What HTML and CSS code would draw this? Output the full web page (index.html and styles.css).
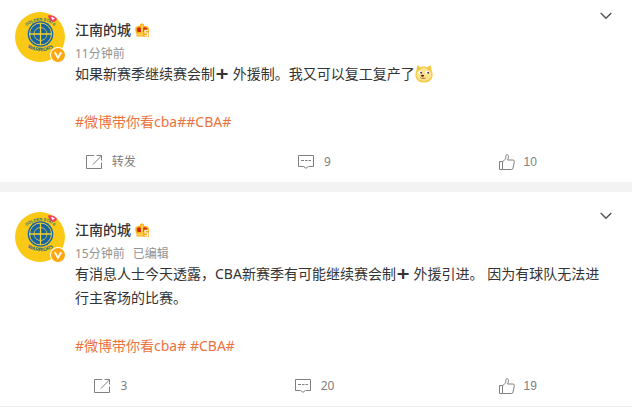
FILE: index.html
```html
<!DOCTYPE html>
<html lang="zh-CN">
<head>
    <meta charset="UTF-8">
    <meta name="viewport" content="width=device-width, initial-scale=1.0">
    <title>江南的城的微博</title>
    <link rel="stylesheet" href="styles.css">
</head>
<body>

    <!-- shared icons -->
    <svg class="sprite" aria-hidden="true">
        <symbol id="icon-avatar" viewBox="0 0 50 50">
            <circle cx="25" cy="25" r="25" fill="#f9c916"/>
            <circle cx="25.500" cy="22" r="12.800" fill="#1464a5"/>
            <g fill="none" stroke="#f3cf2c" stroke-width="1">
                <circle cx="25.500" cy="22" r="11"/>
                <circle cx="25.500" cy="22" r="6.500" stroke-width=".8"/>
                <path d="M25.500 11v22M14.500 22h22" stroke-width="1.300"/>
            </g>
            <path id="arc-top" d="M8 17Q25.500 0 43 17" fill="none"/>
            <path id="arc-bottom" d="M8 32.500Q25.500 46 43 32.500" fill="none"/>
            <g fill="#246580" font-family="Liberation Sans, sans-serif" font-weight="bold" text-anchor="middle">
                <text font-size="4"><textPath href="#arc-top" startOffset="50%">GOLDEN STATE</textPath></text>
                <text font-size="5"><textPath href="#arc-bottom" startOffset="50%">WARRIORS</textPath></text>
            </g>
            <path d="M33 3.500q5-1.500 9 3l-1 2.500-3.500 1q-4-2-4.500-6.500z" fill="#f23c60"/>
            <path d="M36 5.200q1.500-1 2 .6 1.800-.6 1.500 1.200l-2 1z" fill="#fff"/>
        </symbol>
        <symbol id="icon-verified" viewBox="0 0 16 16">
            <circle cx="8" cy="8" r="8" fill="#fff"/>
            <circle cx="8" cy="8" r="7" fill="#ffa70f"/>
            <path d="M4.800 5.200L8 11l3.200-5.800" fill="none" stroke="#fff" stroke-width="1.800"/>
        </symbol>
        <symbol id="icon-crown" viewBox="0 0 14 14">
            <path d="M1 4Q-.3 5 .4 8L1.500 10.500V13.500h11V10.500l1.100-2.500q.7-3-.6-4-1.500-1.500-4-1L9 1.500 7 .2 5 1.500V3Q2.500 2.500 1 4z" fill="#fbb01e"/>
            <path d="M2 5.500Q4 3.500 5.800 5L6 9H3.200Q1.300 8 2 5.500zM8.200 5Q10 3.500 12 5.500q.7 2-1 3.500H8z" fill="#d7260f"/>
            <path d="M7 2v8M2.500 11.500H8" stroke="#ffe15a" stroke-width="1.300" fill="none"/>
            <path d="M8.500 6.500H14V14H8.500z" fill="#fba71b"/>
            <path d="M13.200 7.500h-3v2.500h2.500v2.800H9.500" stroke="#fff" stroke-width="1.200" fill="none"/>
        </symbol>
        <symbol id="icon-doge" viewBox="0 0 18 18">
            <path d="M2 .7Q3.500-.2 5.500 2.200 9 1 12.500 2.200 14.500-.2 16 .7L16.500 5Q18 8 17.500 11.500 16 17.500 9 17.600 2 17.500.5 11.500 0 8 1.500 5z" fill="#f6c944"/>
            <path d="M2.600 6Q4.500 3 9 3t6.400 3Q17 9 16.200 11.500 14.500 15.500 9 16 3.500 15.500 1.800 11.500 1 9 2.600 6z" fill="#fde58e"/>
            <ellipse cx="5.300" cy="7.500" rx="2.200" ry="1.500" fill="#fff"/>
            <ellipse cx="12.500" cy="7.500" rx="2.200" ry="1.500" fill="#fff"/>
            <circle cx="6.200" cy="7.700" r="1" fill="#5a3420"/>
            <circle cx="13.200" cy="7.700" r="1" fill="#5a3420"/>
            <path d="M3.500 5l2-.8M12.500 4.200l2 .8" stroke="#d9a640" stroke-width=".8" fill="none"/>
            <ellipse cx="7.500" cy="10.800" rx="1.600" ry="1" fill="#5a1d18"/>
            <path d="M5.500 12.300Q6.500 14.300 8 13q1.200 1 2.500 0" stroke="#b0552a" stroke-width="1" fill="none"/>
        </symbol>
        <symbol id="icon-more" viewBox="0 0 12 8">
            <path d="M.7 1L6 6.300 11.300 1" fill="none" stroke="currentColor" stroke-width="1.500"/>
        </symbol>
        <symbol id="icon-repost" viewBox="0 0 16 14">
            <path d="M8 .5H.5v13h15V7.500M7 9.500L15.300 1M10.500.5h5v5" fill="none" stroke="currentColor"/>
        </symbol>
        <symbol id="icon-comment" viewBox="0 0 16 14">
            <path d="M.5.500h15v11h-5L8 13.300 5.500 11.500h-5z" fill="none" stroke="currentColor"/>
            <path d="M3 5.500h3M7 5.500h2.500M10.500 5.500H13" fill="none" stroke="currentColor"/>
        </symbol>
        <symbol id="icon-like" viewBox="0 0 16 16">
            <path d="M.5 7.500h3v8h-3zM3.500 7.500C6 6.500 7 4.500 7 1.500 7 .3 9.500.2 9.500 2.500c0 1.500-.5 2.500-1 3.500h5.500q1.600.2 1.400 1.800L14 14q-.3 1.500-1.500 1.500h-9" fill="none" stroke="currentColor"/>
        </symbol>
    </svg>

    <main class="feed">

        <article class="card">
            <header class="card-head">
                <a class="avatar" href="#" aria-label="江南的城">
                    <svg class="avatar-img"><use href="#icon-avatar"/></svg>
                    <svg class="avatar-badge"><use href="#icon-verified"/></svg>
                </a>
                <div class="info">
                    <div class="name-row">
                        <a class="name" href="#">江南的城</a>
                        <svg class="crown"><use href="#icon-crown"/></svg>
                    </div>
                    <div class="meta">
                        <a href="#">11分钟前</a>
                    </div>
                </div>
                <button class="more" type="button" aria-label="更多">
                    <svg class="more-icon"><use href="#icon-more"/></svg>
                </button>
            </header>
            <div class="content">
                <p>如果新赛季继续赛会制<span class="plus">➕&#xFE0E;</span> 外援制。我又可以复工复产了<svg class="emoji"><use href="#icon-doge"/></svg></p>
                <p class="tags"><a href="#">#微博带你看cba#</a><a href="#">#CBA#</a></p>
            </div>
            <footer class="actions">
                <button type="button"><svg class="icon"><use href="#icon-repost"/></svg><span>转发</span></button>
                <button type="button"><svg class="icon"><use href="#icon-comment"/></svg><span>9</span></button>
                <button class="like" type="button"><svg class="icon"><use href="#icon-like"/></svg><span>10</span></button>
            </footer>
        </article>

        <article class="card">
            <header class="card-head">
                <a class="avatar" href="#" aria-label="江南的城">
                    <svg class="avatar-img"><use href="#icon-avatar"/></svg>
                    <svg class="avatar-badge"><use href="#icon-verified"/></svg>
                </a>
                <div class="info">
                    <div class="name-row">
                        <a class="name" href="#">江南的城</a>
                        <svg class="crown"><use href="#icon-crown"/></svg>
                    </div>
                    <div class="meta">
                        <a href="#">15分钟前</a>
                        <span>已编辑</span>
                    </div>
                </div>
                <button class="more" type="button" aria-label="更多">
                    <svg class="more-icon"><use href="#icon-more"/></svg>
                </button>
            </header>
            <div class="content">
                <p>有消息人士今天透露，CBA新赛季有可能继续赛会制<span class="plus">➕&#xFE0E;</span> 外援引进。 因为有球队无法进行主客场的比赛。</p>
                <p class="tags"><a href="#">#微博带你看cba#</a> <a href="#">#CBA#</a></p>
            </div>
            <footer class="actions">
                <button type="button"><svg class="icon"><use href="#icon-repost"/></svg><span>3</span></button>
                <button type="button"><svg class="icon"><use href="#icon-comment"/></svg><span>20</span></button>
                <button class="like" type="button"><svg class="icon"><use href="#icon-like"/></svg><span>19</span></button>
            </footer>
        </article>

    </main>

</body>
</html>
```
FILE: styles.css
```css
body {
    margin: 0;
    background-color: #fff;
    color: #333;
    font-family: "Noto Sans", "Noto Sans CJK SC", sans-serif;
    font-size: 14px;
    line-height: 24px;
}

a {
    color: inherit;
    text-decoration: none;
}

p {
    margin: 0;
}

button {
    padding: 0;
    border: none;
    background: none;
    color: inherit;
    font: inherit;
    cursor: pointer;
}

.sprite {
    position: absolute;
    width: 0;
    height: 0;
}

.card {
    padding-top: 20px;
    border-bottom: 1px solid #eee;
}

.card:first-child {
    padding-top: 12px;
}

.card + .card {
    border-top: 10px solid #f3f3f3;
}

.card:first-child {
    border-bottom: none;
}

.card-head {
    display: flex;
    align-items: flex-start;
    padding: 0 20px 0 15px;
}

.avatar {
    position: relative;
    width: 50px;
    height: 50px;
    margin-right: 10px;
}

.avatar-img {
    display: block;
    width: 50px;
    height: 50px;
}

.avatar-badge {
    position: absolute;
    right: -1px;
    bottom: -1px;
    width: 16px;
    height: 16px;
}

.info {
    flex: 1;
    padding-top: 6px;
}

.name-row {
    display: flex;
    align-items: center;
    gap: 4px;
}

.name {
    font-weight: 500;
}

.crown {
    width: 14px;
    height: 14px;
}

.meta {
    display: flex;
    gap: 8px;
    margin-top: 4px;
    color: #929292;
    font-size: 12px;
    line-height: 16px;
}

.more {
    display: flex;
    color: #555;
}

.more-icon {
    width: 12px;
    height: 8px;
}

.content {
    padding: 0 24px 0 75px;
}

.plus {
    display: inline-block;
    width: 14px;
    font-family: "DejaVu Sans", sans-serif;
    font-size: 16px;
    line-height: 16px;
    text-align: center;
}

.tags {
    margin-top: 24px;
    color: #eb7340;
}

.emoji {
    width: 18px;
    height: 18px;
    vertical-align: -4px;
}

.actions {
    display: grid;
    grid-template-columns: repeat(3, 1fr);
    padding: 8px 12px 0 9px;
    color: #808080;
    font-size: 12px;
    line-height: 40px;
}

.actions button {
    display: flex;
    align-items: center;
    justify-content: center;
    gap: 10px;
}

.actions .like {
    gap: 8px;
    font-family: "Liberation Sans", sans-serif;
}

.icon {
    width: 16px;
    height: 14px;
}

.like .icon {
    height: 16px;
}
```
